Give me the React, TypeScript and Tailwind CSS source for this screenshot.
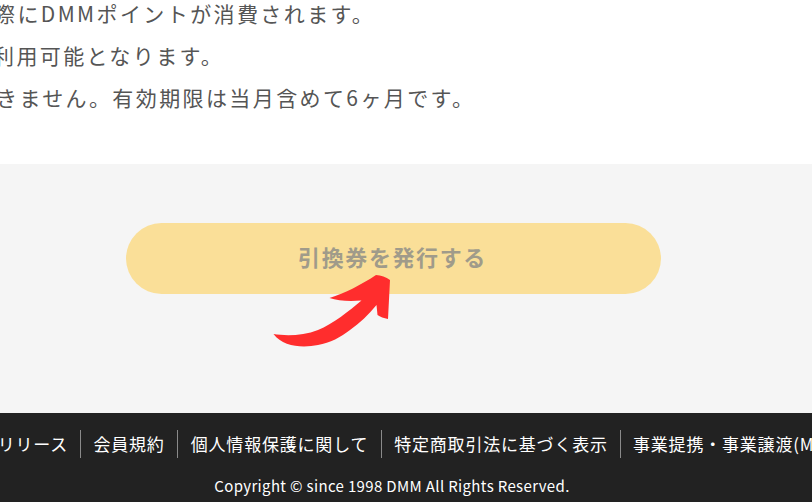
const sans = { fontFamily: '"Noto Sans CJK JP", "Noto Sans", sans-serif' };

const links = [
  { label: "リリース", width: "w-[81px]", justify: "justify-end pr-[12px]" },
  { label: "会員規約", width: "w-[97px]", justify: "justify-center" },
  { label: "個人情報保護に関して", width: "w-[204px]", justify: "justify-center" },
  { label: "特定商取引法に基づく表示", width: "w-[239px]", justify: "justify-center" },
];

export default function App() {
  return (
    <div
      className="relative flex h-[502px] w-[812px] flex-col overflow-hidden bg-white"
      style={sans}
    >
      <section className="h-[164px] shrink-0 whitespace-nowrap text-[21px] leading-[42px] tracking-[2.4px] text-[#555555]">
        <p className="-mt-[8px] -ml-[6px]">際にDMMポイントが消費されます。</p>
        <p className="-ml-[7px]">利用可能となります。</p>
        <p className="-ml-[4px]">きません。有効期限は当月含めて6ヶ月です。</p>
      </section>

      <section className="h-[249px] shrink-0 bg-[#f5f5f5] pt-[59px] pl-[126px]">
        <button className="flex h-[71px] w-[535px] items-center justify-center rounded-full bg-[#fadf98] pr-[2px] pb-[4px] text-[22px] font-bold tracking-[1.6px] text-[#a09b8a]">
          引換券を発行する
        </button>
      </section>

      <footer className="flex h-[89px] shrink-0 flex-col bg-[#222222] text-white">
        <ul className="flex h-[45px] items-end whitespace-nowrap text-[17px] tracking-[0.8px]">
          {links.map((link) => (
            <li
              key={link.label}
              className={`flex h-[28px] shrink-0 items-center border-r border-[#8a8a8a] ${link.width} ${link.justify}`}
            >
              {link.label}
            </li>
          ))}
          <li className="flex h-[28px] shrink-0 items-center pl-[12px]">事業提携・事業譲渡(M&A)</li>
        </ul>
        <p className="mt-[18px] pr-[28px] text-center text-[15px] leading-[20px] tracking-[0.35px]">
          Copyright © since 1998 DMM All Rights Reserved.
        </p>
      </footer>

      <svg
        className="absolute top-[270px] left-[270px]"
        width="125"
        height="80"
        viewBox="270 270 125 80"
      >
        <path
          d="M273.5 334 C285 336 303 336 318 330 C333 324 349 311 361.5 300.5 C350 301.5 338 301 329.5 298 C345 293 361 285 376 275 C381 275.5 386 277 390 280 L388 319 C384 318 380 317 377.5 315 L376.5 305 C368 315 360 323 350 330 C341 337 330 343 318 345 C303 348 283 347 273.5 334 Z"
          fill="#ff2d2d"
        />
      </svg>
    </div>
  );
}
